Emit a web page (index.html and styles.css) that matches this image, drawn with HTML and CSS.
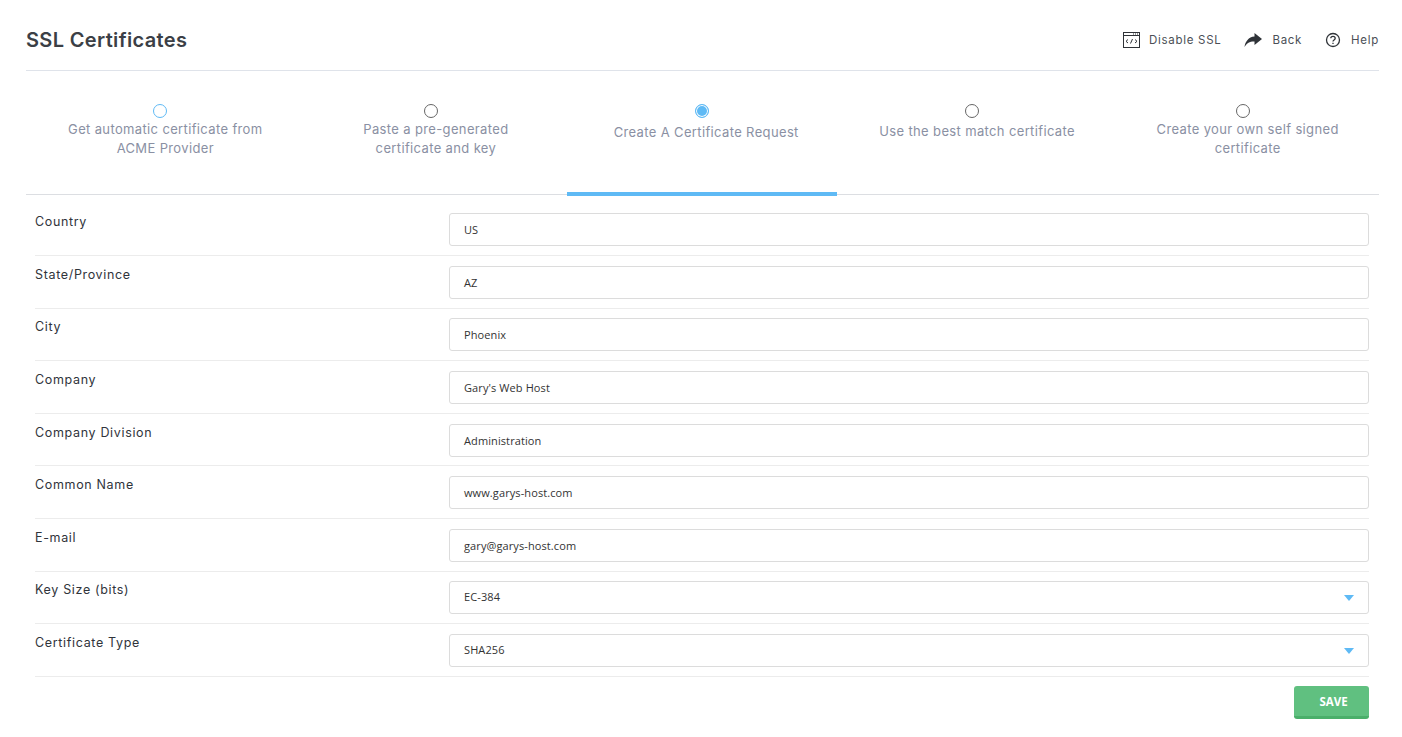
FILE: index.html
```html
<!DOCTYPE html>
<html lang="en">
<head>
<meta charset="utf-8">
<title>SSL Certificates</title>
<link rel="stylesheet" href="styles.css">
</head>
<body>
<div class="page">
  <header class="header">
    <h1 class="title">SSL Certificates</h1>
    <nav class="actions">
      <a class="action">
        <svg class="icon icon-code" width="17" height="16" viewBox="0 0 17 16" fill="none" stroke="#2f3338" stroke-width="1"><rect x="0.5" y="0.5" width="16" height="15"/><path d="M0.5 3.500h16M10 2h1M12 2h1M14 2h1"/><path d="M5 7.500L3 9.300l2 1.700M12 7.500l2 1.800-2 1.700M9.500 7l-2 4.500"/></svg>
        <span>Disable SSL</span>
      </a>
      <a class="action">
        <svg class="icon" width="18" height="16" viewBox="0 0 18 16" fill="#2f3338"><path d="M10.500 1L18 7l-7.500 6V9.500C6 9.300 3 10.800 0.500 15 1.300 9.500 4.500 5 10.500 4.500z"/></svg>
        <span>Back</span>
      </a>
      <a class="action">
        <svg class="icon" width="16" height="16" viewBox="0 0 16 16" fill="none" stroke="#2f3338" stroke-width="1.300"><circle cx="8" cy="8" r="6.500"/><path d="M5.800 6.300C5.800 5 6.800 4.300 8 4.300s2.200.8 2.200 2c0 1.700-2.200 1.700-2.200 3.300"/><path d="M8 10.800v1.200"/></svg>
        <span>Help</span>
      </a>
    </nav>
  </header>

  <div class="tabs">
    <div class="tab">
      <span class="radio radio-blue"></span>
      <span class="tab-label">Get automatic certificate from ACME Provider</span>
    </div>
    <div class="tab">
      <span class="radio"></span>
      <span class="tab-label">Paste a pre-generated certificate and key</span>
    </div>
    <div class="tab tab-active">
      <span class="radio radio-on"></span>
      <span class="tab-label tab-label-single tab-label-active">Create A Certificate Request</span>
    </div>
    <div class="tab">
      <span class="radio"></span>
      <span class="tab-label tab-label-single">Use the best match certificate</span>
    </div>
    <div class="tab">
      <span class="radio"></span>
      <span class="tab-label">Create your own self signed certificate</span>
    </div>
  </div>

  <form class="form">
    <div class="row"><label class="label">Country</label><div class="field">US</div></div>
    <div class="row"><label class="label">State/Province</label><div class="field">AZ</div></div>
    <div class="row"><label class="label">City</label><div class="field">Phoenix</div></div>
    <div class="row"><label class="label">Company</label><div class="field">Gary's Web Host</div></div>
    <div class="row"><label class="label">Company Division</label><div class="field">Administration</div></div>
    <div class="row"><label class="label">Common Name</label><div class="field">www.garys-host.com</div></div>
    <div class="row"><label class="label">E-mail</label><div class="field">gary@garys-host.com</div></div>
    <div class="row"><label class="label">Key Size (bits)</label><div class="field field-select">EC-384<span class="caret"></span></div></div>
    <div class="row"><label class="label">Certificate Type</label><div class="field field-select">SHA256<span class="caret"></span></div></div>
    <div class="footer"><button class="save" type="button">SAVE</button></div>
  </form>
</div>
</body>
</html>
```
FILE: styles.css
```css
* { box-sizing: border-box; }
html, body { margin: 0; padding: 0; background: #fff; }
body { font-family: "Inter", "Open Sans", sans-serif; color: #2f3338; overflow: hidden; }
.page { width: 1402px; height: 737px; padding: 0 23px 0 26px; }

.header {
  height: 71px;
  display: flex;
  align-items: center;
  justify-content: space-between;
  border-bottom: 1px solid #dfe3ea;
  padding-top: 10px;
}
.title { margin: 0; font-size: 20px; font-weight: 600; color: #3b3f46; letter-spacing: 0.35px; }
.actions { display: flex; gap: 23px; }
.action { display: flex; align-items: center; gap: 10px; font-size: 11.500px; color: #4b4f56; letter-spacing: 0.7px; }
.icon { display: block; flex: none; }
.icon-code { margin-right: -1px; }

.tabs { display: grid; grid-template-columns: repeat(5, 1fr); height: 124px; border-bottom: 1px solid #dcdee2; }
.tab {
  display: flex;
  flex-direction: column;
  align-items: center;
  padding-top: 33px;
  height: 125px;
  position: relative;
}
.tab-active { border-bottom: 4px solid #5fbaf5; margin-bottom: -1px; margin-right: 0.6px; }
.radio {
  display: block;
  width: 14px;
  height: 14px;
  border-radius: 50%;
  border: 1.500px solid #666;
  margin-right: 2px;
  background: #fff;
}
.radio-blue { border-color: #5fbaf5; }
.radio-on { border-color: #5fbaf5; background: #5fbaf5; box-shadow: inset 0 0 0 1px #fff; margin-right: 1px; }
.tab-label {
  display: block;
  width: 205px;
  margin: 2px 0 0 8px;
  text-align: center;
  font-size: 13px;
  line-height: 19px;
  color: #8a90a3;
  letter-spacing: 0.36px;
}
.tab-label-single { width: 240px; margin-top: 4px; }
.tab-label-active { margin-top: 5px; }

.form { padding: 0 10px 0 9px; margin-top: 8.700px; }
.row {
  display: flex;
  align-items: flex-start;
  height: 52.550px;
  padding-top: 9.700px;
  border-bottom: 1px solid #ececec;
}
.label { width: 414px; flex: none; font-size: 12.500px; line-height: 18px; color: #30343b; letter-spacing: 0.66px; }
.field {
  flex: 1;
  height: 33px;
  border: 1px solid #dcdcdc;
  border-radius: 3px;
  padding-left: 14px;
  display: flex;
  align-items: center;
  justify-content: space-between;
  font-family: "Open Sans", sans-serif;
  font-size: 11px;
  letter-spacing: 0.1px;
  color: #333;
}
.field-select { padding-right: 14px; padding-bottom: 2px; }
.caret { width: 0; height: 0; border-left: 5px solid transparent; border-right: 5px solid transparent; border-top: 6px solid #5fbaf5; margin-top: 3px; }
.footer { display: flex; justify-content: flex-end; padding-top: 9.200px; }
.save {
  width: 75px;
  height: 33px;
  border: 0;
  border-bottom: 3px solid #4aaf6a;
  border-radius: 3px;
  background: #60c080;
  color: #fff;
  font-family: "Open Sans", sans-serif;
  font-size: 11.500px;
  font-weight: 700;
  padding: 2px 0 0 4px;
}
```
